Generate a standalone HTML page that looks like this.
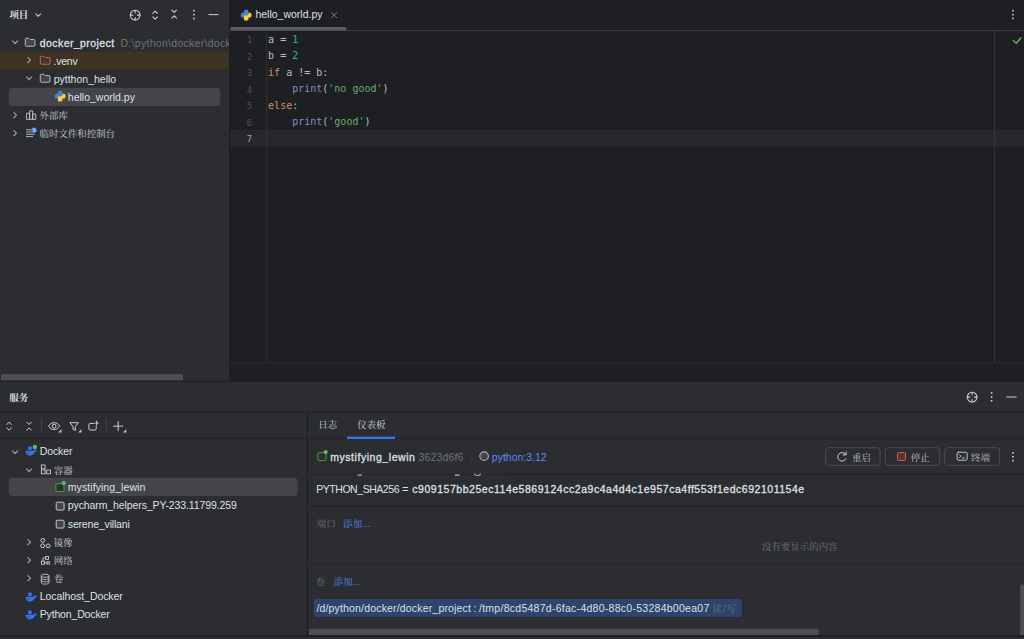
<!DOCTYPE html>
<html lang="zh-CN">
<head>
<meta charset="utf-8">
<title>docker_project – hello_world.py</title>
<style>
*{box-sizing:border-box;margin:0;padding:0}
html,body{width:1024px;height:639px;overflow:hidden;background:#2B2D30}
body{position:relative;font-family:"Liberation Sans","Noto Serif CJK SC",sans-serif;font-size:10.5px;color:#DFE1E5}
.a{position:absolute}
.t{position:absolute;white-space:nowrap;line-height:18px;height:18px;font-size:10.5px;color:#DFE1E5}
.cj{margin-top:1px;font-family:"Liberation Sans","Noto Serif CJK SC",serif;font-size:9.450px;color:#CDCFD5}
.b{font-weight:bold}
.sb{-webkit-text-stroke:0.300px currentColor;letter-spacing:0.420px}
.cj.b{color:#DFE1E5}
.bt{color:#BDBFC5}
.g{color:#6F737A}
.lnk{color:#548AF7}
.ic{position:absolute;width:12.3px;height:12.3px;overflow:visible}
.code{position:absolute;left:268.1px;margin-top:0.8px;white-space:pre;font-family:"DejaVu Sans Mono","Liberation Mono",monospace;font-size:10px;line-height:16.5px;height:16.5px;color:#BCBEC4}
.ln{position:absolute;left:230.700px;width:21.4px;margin-top:0.9px;text-align:right;font-family:"DejaVu Sans Mono","Liberation Mono",monospace;font-size:8.8px;line-height:16.5px;height:16.5px;color:#4B5059}
.kw{color:#CF8E6D}.nu{color:#2AACB8}.st{color:#6AAB73}.bi{color:#8888C6}
</style>
</head>
<body>

<!-- ================= PROJECT TOOL WINDOW ================= -->
<div class="a" id="proj" style="left:0;top:0;width:229px;height:381px;background:#2B2D30;overflow:hidden">
  <div class="t cj b" id="t_proj" style="left:9.400px;top:4.900px">项目</div>
  <svg class="ic" style="left:31.600px;top:8.700px" viewBox="0 0 16 16"><path d="M5 6.400 8.100 9.500 11.200 6.400" fill="none" stroke="#B4B8BF" stroke-width="1.600" stroke-linecap="round" stroke-linejoin="round"/></svg>

  <!-- header action icons -->
  <svg class="ic" style="left:129.100px;top:8.700px" viewBox="0 0 16 16"><g fill="none" stroke="#CED0D6" stroke-width="1.400" stroke-linecap="round"><circle cx="8" cy="8" r="6.300"/><path d="M8 1.700V5M8 11v3.300M1.700 8H5M11 8h3.300"/></g></svg>
  <svg class="ic" style="left:149px;top:8.700px" viewBox="0 0 16 16"><path d="M5 5.800 8 2.800 11 5.800M5 10.200 8 13.200 11 10.200" fill="none" stroke="#CED0D6" stroke-width="1.400" stroke-linecap="round" stroke-linejoin="round"/></svg>
  <svg class="ic" style="left:168px;top:8.300px" viewBox="0 0 16 16"><path d="M5 2.800 8 5.800 11 2.800M5 13.200 8 10.200 11 13.200" fill="none" stroke="#CED0D6" stroke-width="1.400" stroke-linecap="round" stroke-linejoin="round"/></svg>
  <svg class="a" style="left:193px;top:9px" width="2" height="3"><rect x="0.10" y="0.90" width="1.60" height="1.60" fill="#CED0D6"/></svg>
  <svg class="a" style="left:193px;top:13px" width="2" height="3"><rect x="0.10" y="0.80" width="1.60" height="1.60" fill="#CED0D6"/></svg>
  <svg class="a" style="left:193px;top:17px" width="2" height="3"><rect x="0.10" y="0.70" width="1.60" height="1.60" fill="#CED0D6"/></svg>
  <svg class="a" style="left:208px;top:14px" width="11" height="2"><rect x="0.50" y="0.10" width="10.00" height="1.00" fill="#CED0D6"/></svg>

  <!-- row 1 : docker_project -->
  <svg class="ic" style="left:8.8px;top:36.300px" viewBox="0 0 16 16"><path d="M4.600 6.400 8 9.800 11.400 6.400" fill="none" stroke="#9DA0A8" stroke-width="1.500" stroke-linecap="round" stroke-linejoin="round"/></svg>
  <svg class="ic" style="left:24px;top:35.800px" viewBox="0 0 16 16"><path d="M1.700 4.200c0-.700.600-1.300 1.300-1.300h2.700c.3 0 .600.100.800.300l1.100 1.100c.2.200.5.300.8.300H13c.700 0 1.300.600 1.300 1.300V12c0 .700-.600 1.300-1.300 1.300H3c-.700 0-1.300-.600-1.300-1.300z" fill="#43454A" stroke="#CED0D6" stroke-width="1.100"/></svg>
  <div class="t sb" id="t_dp" style="left:39.800px;top:34px">docker_project</div>
  <div class="t g" id="t_path" style="left:120.500px;top:34px;letter-spacing:0.290px">D:\python\docker\docker_project</div>

  <!-- row 2 : .venv (excluded) -->
  <svg class="a" style="left:0;top:50px" width="229" height="20"><rect x="0" y="1.350" width="229" height="18.050" fill="#3D3223"/></svg>
  <svg class="ic" style="left:22.5px;top:54.4px" viewBox="0 0 16 16"><path d="M6.400 4.600 9.800 8 6.400 11.400" fill="none" stroke="#9DA0A8" stroke-width="1.500" stroke-linecap="round" stroke-linejoin="round"/></svg>
  <svg class="ic" style="left:38.900px;top:53.900px" viewBox="0 0 16 16"><path d="M1.700 4.200c0-.700.600-1.300 1.300-1.300h2.700c.3 0 .600.100.800.300l1.100 1.100c.2.200.5.300.8.300H13c.700 0 1.300.600 1.300 1.300V12c0 .700-.600 1.300-1.300 1.300H3c-.700 0-1.300-.600-1.300-1.300z" fill="#45322B" stroke="#C77D55" stroke-width="1.100"/></svg>
  <div class="t" id="t_venv" style="left:53.600px;top:52px;letter-spacing:-0.25px">.venv</div>

  <!-- row 3 : pytthon_hello -->
  <svg class="ic" style="left:23px;top:72.400px" viewBox="0 0 16 16"><path d="M4.600 6.400 8 9.800 11.400 6.400" fill="none" stroke="#9DA0A8" stroke-width="1.500" stroke-linecap="round" stroke-linejoin="round"/></svg>
  <svg class="ic" style="left:39.100px;top:72.400px" viewBox="0 0 16 16"><path d="M1.700 4.200c0-.700.600-1.300 1.300-1.300h2.700c.3 0 .600.100.800.300l1.100 1.100c.2.200.5.300.8.300H13c.700 0 1.300.600 1.300 1.300V12c0 .700-.600 1.300-1.300 1.300H3c-.700 0-1.300-.600-1.300-1.300z" fill="#43454A" stroke="#CED0D6" stroke-width="1.100"/></svg>
  <div class="t" id="t_ph" style="left:53.700px;top:70px">pytthon_hello</div>

  <!-- row 4 : hello_world.py (selected) -->
  <svg class="a" style="left:8px;top:87px" width="214" height="20"><rect x="0.75" y="0.75" width="211.500" height="18.200" rx="3.500" fill="#43454A"/></svg>
  <svg class="ic pyi" style="left:53.600px;top:90px" viewBox="0 0 16 16"><path d="M8 1C6 1 5 1.700 5 3v2H3.300C1.900 5 1 6.100 1 8s.900 3 2.300 3H5V9.800C5 8.600 5.900 7.800 7.100 7.800h2.700C10.500 7.800 11 7.200 11 6.400V3c0-1.300-1-2-3-2z" fill="#3F88C9"/><path d="M8 15c2 0 3-.700 3-2v-2h1.700c1.400 0 2.300-1.100 2.300-3s-.900-3-2.300-3H11v1.200C11 7.400 10.100 8.200 8.900 8.200H6.200C5.500 8.200 5 8.800 5 9.600V13c0 1.300 1 2 3 2z" fill="#FBD234"/><circle cx="6.500" cy="2.900" r=".55" fill="#2F6CA6"/><circle cx="9.500" cy="13.100" r=".55" fill="#D9B022"/></svg>
  <div class="t" id="t_hw" style="left:67.800px;top:88px">hello_world.py</div>

  <!-- row 5 : external libs -->
  <svg class="ic" style="left:8.900px;top:108.600px" viewBox="0 0 16 16"><path d="M6.400 4.600 9.800 8 6.400 11.400" fill="none" stroke="#9DA0A8" stroke-width="1.500" stroke-linecap="round" stroke-linejoin="round"/></svg>
  <svg class="ic" style="left:24.800px;top:108.500px" viewBox="0 0 16 16"><g fill="none" stroke="#CED0D6" stroke-width="1.100" stroke-linejoin="round"><rect x="2" y="5.500" width="4" height="8"/><rect x="6" y="2.500" width="4" height="11"/><rect x="10" y="6.500" width="4" height="7"/></g></svg>
  <div class="t cj" id="t_lib" style="left:39.500px;top:105.700px">外部库</div>

  <!-- row 6 : scratches -->
  <svg class="ic" style="left:8.900px;top:126.700px" viewBox="0 0 16 16"><path d="M6.400 4.600 9.800 8 6.400 11.400" fill="none" stroke="#9DA0A8" stroke-width="1.500" stroke-linecap="round" stroke-linejoin="round"/></svg>
  <svg class="ic" style="left:24.900px;top:127.300px" viewBox="0 0 16 16"><path d="M2 6.500h6M2 9.500h10M2 12.500h8M2 3.500h5" fill="none" stroke="#CED0D6" stroke-width="1.100" stroke-linecap="round"/><circle cx="11.700" cy="4.300" r="3.600" fill="#548AF7"/><path d="M11.700 2.500v2l1.200.9" fill="none" stroke="#fff" stroke-width="0.9" stroke-linecap="round" stroke-linejoin="round"/></svg>
  <div class="t cj" id="t_scr" style="left:39.500px;top:123.800px">临时文件和控制台</div>

  <!-- horizontal scrollbar -->
  <svg class="a" style="left:1px;top:374px" width="182" height="7"><rect x="0.00" y="0.20" width="182.00" height="6.20" fill="#4D4F53"/></svg>
</div>

<!-- ================= EDITOR ================= -->
<div class="a" id="editor" style="left:229px;top:0;width:795px;height:381.600px;background:#1E1F22;overflow:hidden"></div>
<!-- tab -->
<svg class="ic" style="left:239.500px;top:8.500px" viewBox="0 0 16 16"><path d="M8 1C6 1 5 1.700 5 3v2H3.300C1.900 5 1 6.100 1 8s.900 3 2.300 3H5V9.800C5 8.600 5.900 7.800 7.100 7.800h2.700C10.500 7.800 11 7.200 11 6.400V3c0-1.300-1-2-3-2z" fill="#3F88C9"/><path d="M8 15c2 0 3-.700 3-2v-2h1.700c1.400 0 2.300-1.100 2.300-3s-.900-3-2.300-3H11v1.200C11 7.400 10.100 8.200 8.900 8.200H6.200C5.500 8.200 5 8.800 5 9.600V13c0 1.300 1 2 3 2z" fill="#FBD234"/><circle cx="6.500" cy="2.900" r=".55" fill="#2F6CA6"/><circle cx="9.500" cy="13.100" r=".55" fill="#D9B022"/></svg>
<div class="t" id="t_tab" style="left:255.400px;top:5px">hello_world.py</div>
<svg class="ic" style="left:328.300px;top:8.500px" viewBox="0 0 16 16"><path d="M4.500 4.500l7 7M11.500 4.500l-7 7" fill="none" stroke="#868A91" stroke-width="1.100" stroke-linecap="round"/></svg>
<svg class="a" style="left:229px;top:30px" width="795" height="1"><rect x="0.00" y="0.00" width="795.00" height="1.00" fill="#393B40"/></svg>
<svg class="a" style="left:230px;top:27px" width="117" height="4"><rect x="0.300" y="0.000" width="116.400" height="3.500" rx="1.700" fill="#5A5D63"/></svg>
<svg class="a" style="left:1012px;top:9px" width="2" height="3"><rect x="0.10" y="0.90" width="1.60" height="1.60" fill="#CED0D6"/></svg>
<svg class="a" style="left:1012px;top:13px" width="2" height="3"><rect x="0.10" y="0.80" width="1.60" height="1.60" fill="#CED0D6"/></svg>
<svg class="a" style="left:1012px;top:17px" width="2" height="3"><rect x="0.10" y="0.60" width="1.60" height="1.60" fill="#CED0D6"/></svg>

<!-- gutter / code -->
<svg class="a" style="left:230px;top:129px" width="794" height="18"><rect x="0.1" y="0.9" width="794" height="16.700" fill="#26282E"/></svg>
<svg class="a" style="left:266px;top:31px" width="2" height="332"><rect x="0.30" y="0.00" width="1.00" height="332.00" fill="#313438"/></svg>
<svg class="a" style="left:994px;top:31px" width="1" height="332"><rect x="0.00" y="0.00" width="1.00" height="332.00" fill="#313438"/></svg>
<svg class="a" style="left:230px;top:362px" width="794" height="2"><rect x="0.00" y="0.60" width="794.00" height="1.00" fill="#292B2E"/></svg>

<div class="ln" style="top:31.200px">1</div>
<div class="ln" style="top:47.700px">2</div>
<div class="ln" style="top:64.200px">3</div>
<div class="ln" style="top:80.700px">4</div>
<div class="ln" style="top:97.200px">5</div>
<div class="ln" style="top:113.700px">6</div>
<div class="ln" style="top:130.200px;color:#A1A3AB">7</div>

<div class="code" style="top:31.200px">a = <span class="nu">1</span></div>
<div class="code" style="top:47.700px">b = <span class="nu">2</span></div>
<div class="code" style="top:64.200px"><span class="kw">if</span> a != b:</div>
<div class="code" style="top:80.700px">    <span class="bi">print</span>(<span class="st">'no good'</span>)</div>
<div class="code" style="top:97.200px"><span class="kw">else</span>:</div>
<div class="code" style="top:113.700px">    <span class="bi">print</span>(<span class="st">'good'</span>)</div>

<svg class="a" style="left:1011px;top:35px;width:12px;height:10px" viewBox="0 0 12 10"><path d="M2 5.300 5.300 8.200 10.200 2.400" fill="none" stroke="#5FAD65" stroke-width="1.500"/></svg>

<!-- ================= SERVICES TOOL WINDOW ================= -->
<svg class="a" style="left:0px;top:380px" width="1024" height="3"><rect x="0.00" y="0.80" width="1024.00" height="1.40" fill="#1E1F22"/></svg>
<div class="a" id="svc" style="left:0;top:382.200px;width:1024px;height:253px;background:#2B2D30"></div>
<svg class="a" style="left:0px;top:635px" width="1024" height="2"><rect x="0.00" y="0.20" width="1024.00" height="1.80" fill="#1E1F22"/></svg>

<div class="t cj b" id="t_svc" style="left:9.300px;top:388.300px">服务</div>
<svg class="ic" style="left:965.900px;top:391.100px" viewBox="0 0 16 16"><g fill="none" stroke="#CED0D6" stroke-width="1.400" stroke-linecap="round"><circle cx="8" cy="8" r="6.300"/><path d="M8 1.700V5M8 11v3.300M1.700 8H5M11 8h3.300"/></g></svg>
<svg class="a" style="left:990px;top:392px" width="3" height="2"><rect x="0.80" y="0.20" width="1.60" height="1.60" fill="#CED0D6"/></svg>
<svg class="a" style="left:990px;top:396px" width="3" height="2"><rect x="0.80" y="0.20" width="1.60" height="1.60" fill="#CED0D6"/></svg>
<svg class="a" style="left:990px;top:400px" width="3" height="2"><rect x="0.80" y="0.00" width="1.60" height="1.60" fill="#CED0D6"/></svg>
<svg class="a" style="left:1006px;top:396px" width="11" height="2"><rect x="0.40" y="0.50" width="10.20" height="1.00" fill="#CED0D6"/></svg>
<svg class="a" style="left:0px;top:411px" width="1024" height="2"><rect x="0.00" y="0.80" width="1024.00" height="1.00" fill="#232427"/></svg>

<!-- services toolbar -->
<svg class="ic" style="left:3.400px;top:419.600px" viewBox="0 0 16 16"><path d="M5 5.800 8 2.800 11 5.800M5 10.200 8 13.200 11 10.200" fill="none" stroke="#CED0D6" stroke-width="1.300" stroke-linecap="round" stroke-linejoin="round"/></svg>
<svg class="ic" style="left:22.900px;top:419.600px" viewBox="0 0 16 16"><path d="M5 2.800 8 5.800 11 2.800M5 13.200 8 10.200 11 13.200" fill="none" stroke="#CED0D6" stroke-width="1.300" stroke-linecap="round" stroke-linejoin="round"/></svg>
<svg class="a" style="left:41px;top:418px" width="2" height="15"><rect x="0.10" y="0.00" width="1.00" height="14.50" fill="#43454A"/></svg>
<svg class="ic" style="left:47.900px;top:419.600px" viewBox="0 0 16 16"><g fill="none" stroke="#CED0D6" stroke-width="1.300"><path d="M.8 8C2.300 5.200 4.900 3.500 8 3.500s5.700 1.700 7.200 4.500C13.700 10.800 11.100 12.500 8 12.500S2.300 10.800.8 8z"/><circle cx="8" cy="8" r="2.500"/></g><path d="M17.500 12v4.200h-4.200z" fill="#CED0D6"/></svg>
<svg class="ic" style="left:67.700px;top:419.600px" viewBox="0 0 16 16"><path d="M2.500 3.500h11L9.500 8.500v5l-3-1.500V8.500z" fill="none" stroke="#CED0D6" stroke-width="1.300" stroke-linejoin="round"/><path d="M17.500 12v4.200h-4.200z" fill="#CED0D6"/></svg>
<svg class="ic" style="left:87px;top:419.600px" viewBox="0 0 16 16"><g fill="none" stroke="#CED0D6" stroke-width="1.300" stroke-linecap="round"><path d="M8.500 4.500H4c-.800 0-1.500.700-1.500 1.500v5.500c0 .800.700 1.500 1.500 1.500h6.500c.800 0 1.500-.700 1.500-1.500V8"/><path d="M12.500 1.500v5M10 4h5"/></g></svg>
<svg class="a" style="left:105px;top:418px" width="2" height="15"><rect x="0.80" y="0.00" width="1.00" height="14.50" fill="#43454A"/></svg>
<svg class="ic" style="left:111.600px;top:419.600px" viewBox="0 0 16 16"><path d="M8 2v12M2 8h12" fill="none" stroke="#CED0D6" stroke-width="1.300" stroke-linecap="round"/><path d="M18.500 12v4.200h-4.200z" fill="#CED0D6"/></svg>
<svg class="a" style="left:0px;top:437px" width="307" height="2"><rect x="0.00" y="0.90" width="307.00" height="1.00" fill="#232427"/></svg>

<!-- vertical divider -->
<svg class="a" style="left:307px;top:412px" width="1" height="224"><rect x="0.00" y="0.00" width="1.00" height="223.20" fill="#1E1F22"/></svg>

<!-- ===== services tree ===== -->
<svg class="ic" style="left:8.800px;top:445.900px" viewBox="0 0 16 16"><path d="M4.600 6.400 8 9.800 11.400 6.400" fill="none" stroke="#9DA0A8" stroke-width="1.500" stroke-linecap="round" stroke-linejoin="round"/></svg>
<svg class="ic dk" style="left:24.600px;top:445.300px" viewBox="0 0 16 16"><path d="M4.200 2.100h4.500v4.500h-4.500zM.8 7.500H11.600C11.800 6.300 12.400 5.400 13.300 4.900c.5.700.6 1.500.4 2.200.6-.3 1.200-.3 1.700-.1-.3 1.200-1.300 1.900-2.500 1.900-1 3-3.500 4.900-6.700 4.900C3 13.800.9 11.500.8 7.500z" fill="#3574F0"/><circle cx="4.600" cy="10.300" r=".75" fill="#2B2D30"/><circle cx="12.800" cy="2.500" r="2.900" fill="#5FB865"/></svg>
<div class="t" id="s_docker" style="left:39.700px;top:442px;letter-spacing:-0.08px">Docker</div>

<svg class="ic" style="left:23px;top:463.600px" viewBox="0 0 16 16"><path d="M4.600 6.400 8 9.800 11.400 6.400" fill="none" stroke="#9DA0A8" stroke-width="1.500" stroke-linecap="round" stroke-linejoin="round"/></svg>
<svg class="ic" style="left:39.900px;top:463.300px" viewBox="0 0 16 16"><g fill="none" stroke="#CED0D6" stroke-width="1.150"><rect x="1.750" y="2.600" width="4.900" height="4.900"/><rect x="1.750" y="9.150" width="4.900" height="4.900"/><rect x="8.700" y="9.150" width="4.900" height="4.900"/></g></svg>
<div class="t cj" id="s_cont" style="left:53.800px;top:461.3px">容器</div>

<svg class="a" style="left:8px;top:477px" width="291" height="20"><rect x="0.75" y="0.700" width="288.750" height="18.300" rx="3.500" fill="#43454A"/></svg>
<svg class="ic" style="left:53.900px;top:481.200px" viewBox="0 0 16 16"><rect x="2.500" y="3.500" width="10.500" height="10.300" rx="1.300" fill="#253627" stroke="#57965C" stroke-width="1.250"/><circle cx="12.600" cy="2.700" r="2.800" fill="#5FB865"/></svg>
<div class="t" id="s_myst" style="left:67.800px;top:478px;letter-spacing:0.07px">mystifying_lewin</div>

<svg class="ic" style="left:53.700px;top:499.800px" viewBox="0 0 16 16"><rect x="2.900" y="2.900" width="10.200" height="10.200" rx="1.300" fill="#43454A" stroke="#CED0D6" stroke-width="1.200"/></svg>
<div class="t" id="s_pych" style="left:67.800px;top:496px;letter-spacing:-0.1px">pycharm_helpers_PY-233.11799.259</div>

<svg class="ic" style="left:53.700px;top:518px" viewBox="0 0 16 16"><rect x="2.900" y="2.900" width="10.200" height="10.200" rx="1.300" fill="#43454A" stroke="#CED0D6" stroke-width="1.200"/></svg>
<div class="t" id="s_ser" style="left:67.800px;top:514.6px;letter-spacing:-0.17px">serene_villani</div>

<svg class="ic" style="left:23px;top:536.300px" viewBox="0 0 16 16"><path d="M6.400 4.600 9.800 8 6.400 11.400" fill="none" stroke="#9DA0A8" stroke-width="1.500" stroke-linecap="round" stroke-linejoin="round"/></svg>
<svg class="ic" style="left:39.100px;top:536.800px" viewBox="0 0 16 16"><g fill="none" stroke="#CED0D6" stroke-width="1.300"><circle cx="5" cy="4.400" r="2.500"/><circle cx="4.700" cy="11.500" r="2.500"/><circle cx="11.800" cy="11.500" r="2.500"/></g></svg>
<div class="t cj" id="s_img" style="left:53.800px;top:533.0px">镜像</div>

<svg class="ic" style="left:23px;top:554.400px" viewBox="0 0 16 16"><path d="M6.400 4.600 9.800 8 6.400 11.400" fill="none" stroke="#9DA0A8" stroke-width="1.500" stroke-linecap="round" stroke-linejoin="round"/></svg>
<svg class="ic" style="left:39.100px;top:554.300px" viewBox="0 0 16 16"><g fill="none" stroke="#CED0D6" stroke-width="1.150"><rect x="8.700" y="3.300" width="3.700" height="3.700"/><rect x="3.100" y="9.300" width="4" height="4"/><rect x="10.500" y="10.100" width="3" height="3"/><path d="M8.700 5.200H5.100v4.100M7.100 11.500h3.400"/></g></svg>
<div class="t cj" id="s_net" style="left:53.800px;top:551.1px">网络</div>

<svg class="ic" style="left:23px;top:572.400px" viewBox="0 0 16 16"><path d="M6.400 4.600 9.800 8 6.400 11.400" fill="none" stroke="#9DA0A8" stroke-width="1.500" stroke-linecap="round" stroke-linejoin="round"/></svg>
<svg class="ic" style="left:39.100px;top:572.700px" viewBox="0 0 16 16"><g fill="none" stroke="#CED0D6" stroke-width="1.100"><ellipse cx="8" cy="3.600" rx="5" ry="2.100"/><path d="M3 3.600v8.800c0 1.200 2.200 2.100 5 2.100s5-.9 5-2.100V3.600M3 6.500c0 1.200 2.200 2.100 5 2.100s5-.9 5-2.100M3 9.500c0 1.200 2.200 2.100 5 2.100s5-.9 5-2.100"/></g></svg>
<div class="t cj" id="s_vol" style="left:53.800px;top:569.2px">卷</div>

<svg class="ic dk" style="left:24.700px;top:590.600px" viewBox="0 0 16 16"><path d="M4.200 2.100h4.500v4.500h-4.500zM.8 7.500H11.600C11.800 6.300 12.400 5.400 13.300 4.900c.5.700.6 1.500.4 2.200.6-.3 1.200-.3 1.700-.1-.3 1.200-1.300 1.900-2.500 1.900-1 3-3.500 4.900-6.700 4.900C3 13.800.9 11.500.8 7.500z" fill="#3574F0"/><circle cx="4.600" cy="10.300" r=".75" fill="#2B2D30"/></svg>
<div class="t" id="s_loc" style="left:39.700px;top:587px;letter-spacing:-0.06px">Localhost_Docker</div>

<svg class="ic dk" style="left:24.700px;top:608.800px" viewBox="0 0 16 16"><path d="M4.200 2.100h4.500v4.500h-4.500zM.8 7.500H11.600C11.800 6.300 12.400 5.400 13.300 4.900c.5.700.6 1.500.4 2.200.6-.3 1.200-.3 1.700-.1-.3 1.200-1.300 1.900-2.500 1.900-1 3-3.500 4.900-6.700 4.900C3 13.800.9 11.500.8 7.500z" fill="#3574F0"/><circle cx="4.600" cy="10.300" r=".75" fill="#2B2D30"/></svg>
<div class="t" id="s_pyd" style="left:39.700px;top:605px;letter-spacing:-0.15px">Python_Docker</div>

<!-- ===== services right panel ===== -->
<div class="t cj" id="r_log" style="left:318.200px;top:414.900px">日志</div>
<div class="t cj" id="r_dash" style="left:357.200px;top:415px">仪表板</div>
<svg class="a" style="left:308px;top:438px" width="716" height="2"><rect x="0.00" y="0.20" width="716.00" height="1.00" fill="#232427"/></svg>
<svg class="a" style="left:347px;top:436px" width="48" height="3"><rect x="0.00" y="0.60" width="48.00" height="2.40" fill="#3574F0"/></svg>

<svg class="ic" style="left:315.500px;top:450.100px" viewBox="0 0 16 16"><rect x="2.500" y="3.500" width="10.500" height="10.300" rx="1.300" fill="#253627" stroke="#57965C" stroke-width="1.250"/><circle cx="12.600" cy="2.700" r="2.800" fill="#5FB865"/></svg>
<div class="t sb" id="r_name" style="left:330.200px;top:447.700px;letter-spacing:0.550px">mystifying_lewin</div>
<div class="t g" id="r_id" style="left:418.600px;top:447.700px;letter-spacing:0.15px">3623d6f6</div>
<svg class="a" style="left:471px;top:451px" width="1" height="12"><rect x="0.00" y="0.00" width="1.00" height="11.50" fill="#323438"/></svg>
<svg class="ic" style="left:477.550px;top:450.300px" viewBox="0 0 16 16"><circle cx="8" cy="8" r="5.550" fill="#43454A" stroke="#AEB1B8" stroke-width="1.500"/></svg>
<div class="t lnk" id="r_img" style="left:491.800px;top:447.700px">python:3.12</div>

<svg class="a" style="left:825px;top:447px" width="57" height="20"><rect x="0.60" y="0.700" width="54.50" height="17.600" rx="3" fill="none" stroke="#4B4D53" stroke-width="1"/></svg>
<svg class="ic" style="left:835.800px;top:450.800px" viewBox="0 0 16 16"><g fill="none" stroke="#CED0D6" stroke-width="1.300" stroke-linecap="round" stroke-linejoin="round"><path d="M12.060 3.850A5.600 5.600 0 1 0 12.980 9.970"/><path d="M13.200 1.200v3.900h-3.900" /></g></svg>
<div class="t cj bt" id="b_re" style="left:852px;top:447.500px">重启</div>
<svg class="a" style="left:884px;top:447px" width="58" height="20"><rect x="1.30" y="0.700" width="54.40" height="17.600" rx="3" fill="none" stroke="#4B4D53" stroke-width="1"/></svg>
<div class="a" style="left:896.800px;top:451.900px;width:9.400px;height:9.500px;background:#5A3636;border:1px solid #CB5757;border-radius:1.500px"></div>
<div class="t cj bt" id="b_st" style="left:910.800px;top:447.500px">停止</div>
<svg class="a" style="left:944px;top:447px" width="58" height="20"><rect x="0.70" y="0.700" width="55.00" height="17.600" rx="3" fill="none" stroke="#4B4D53" stroke-width="1"/></svg>
<svg class="ic" style="left:955.500px;top:450px" viewBox="0 0 16 16"><g fill="none" stroke="#CED0D6" stroke-width="1.200" stroke-linecap="round" stroke-linejoin="round"><rect x="1.500" y="2.900" width="13" height="10.400" rx="1.700"/><path d="M4.500 6.100 6.400 8 4.500 9.900M8 10.400h3"/></g></svg>
<div class="t cj bt" id="b_te" style="left:971px;top:447.500px">终端</div>

<svg class="a" style="left:1011px;top:451px" width="3" height="12"><rect x="1.100" y="1.100" width="1.600" height="1.600" fill="#CED0D6"/><rect x="1.100" y="4.900" width="1.600" height="1.600" fill="#CED0D6"/><rect x="1.100" y="8.800" width="1.600" height="1.600" fill="#CED0D6"/></svg>
<svg class="a" style="left:309px;top:473px" width="715" height="2"><rect x="0.00" y="0.60" width="715.00" height="1.00" fill="#232427"/></svg>
<svg class="a" style="left:357px;top:474px" width="5" height="2"><rect x="0.50" y="0.50" width="4.50" height="1.10" fill="#B9BBC0"/></svg>
<svg class="a" style="left:455px;top:474px" width="5" height="2"><rect x="0.00" y="0.50" width="4.50" height="1.20" fill="#C5C7CC"/></svg>
<div class="a" style="left:474px;top:473px;width:7.300px;height:3.400px;border:1.200px solid #A9ABB1;border-top:none;border-radius:0 0 3.600px 3.600px"></div>
<svg class="a" style="left:309px;top:472px" width="200" height="2"><rect x="0.00" y="0.00" width="200.00" height="1.60" fill="#2B2D30"/></svg>
<div class="t" id="r_sha" style="left:316.200px;top:480px;letter-spacing:-0.450px">PYTHON_SHA256</div>
<div class="t" id="r_eq" style="left:402.300px;top:480px">=</div>
<div class="t sb" id="r_shav" style="left:412.300px;top:480px;letter-spacing:0.530px">c909157bb25ec114e5869124cc2a9c4a4d4c1e957ca4ff553f1edc692101154e</div>
<svg class="a" style="left:309px;top:505px" width="715" height="2"><rect x="0.00" y="0.80" width="715.00" height="1.00" fill="#232427"/></svg>

<div class="t cj g" id="r_port" style="left:316.700px;top:514.300px">端口</div>
<div class="t cj lnk" id="r_padd" style="left:343px;top:514.300px;letter-spacing:0.200px">添加...</div>
<div class="t cj g" id="r_none" style="left:762px;top:537.200px">没有要显示的内容</div>
<svg class="a" style="left:309px;top:564px" width="715" height="1"><rect x="0.00" y="0.00" width="715.00" height="1.00" fill="#232427"/></svg>

<div class="t cj g" id="r_vol" style="left:315.4px;top:572.4px">卷</div>
<div class="t cj lnk" id="r_vadd" style="left:333.600px;top:572.4px;letter-spacing:0.200px">添加...</div>
<svg class="a" style="left:314px;top:599px" width="428" height="18"><rect x="0.00" y="0.00" width="427.80" height="17.90" fill="#2E436E"/></svg>
<div class="t" id="r_path" style="left:316.400px;top:599px;word-spacing:-0.700px;letter-spacing:0.170px">/d/python/docker/docker_project : <span style="letter-spacing:0.270px">/tmp/8cd5487d-6fac-4d80-88c0-53284b00ea07</span></div>
<div class="t cj g" id="r_rw" style="left:712.6px;top:598.800px;letter-spacing:0.900px">读/写</div>

<svg class="a" style="left:309px;top:628px" width="510" height="7"><rect x="0.00" y="0.80" width="509.70" height="6.20" fill="#4D4F53"/></svg>
<svg class="a" style="left:1020px;top:584px" width="4" height="51"><rect x="0.20" y="0.60" width="3.80" height="50.40" fill="#4D4F53"/></svg>

</body>
</html>
